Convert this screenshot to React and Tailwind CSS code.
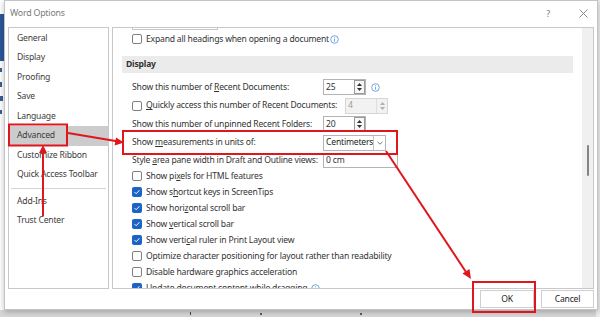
import React from "react";

function Check({ checked }) {
  if (checked) {
    return (
      <span className="w-[10px] h-[10px] rounded-[2px] bg-[#1b63c6] flex items-center justify-center shrink-0">
        <svg width="8" height="8" viewBox="0 0 8 8">
          <path d="M1.6 4.1 L3.2 5.7 L6.4 2.3" fill="none" stroke="white" strokeWidth="1" />
        </svg>
      </span>
    );
  }
  return <span className="w-[10px] h-[10px] rounded-[2px] border border-[#7f7f7f] bg-white shrink-0" />;
}

function Info() {
  return (
    <svg width="9" height="9" viewBox="0 0 9 9" className="shrink-0">
      <circle cx="4.5" cy="4.5" r="3.8" fill="none" stroke="#4f8fdc" strokeWidth="0.8" />
      <circle cx="4.5" cy="2.7" r="0.5" fill="#4f8fdc" />
      <path d="M4.5 3.9 V6.6" stroke="#4f8fdc" strokeWidth="0.8" />
    </svg>
  );
}

function Spinner({ value, disabled }) {
  return (
    <div
      className={
        disabled
          ? "h-[16px] w-[43px] border border-[#d6d6d6] bg-[#f2f2f2] text-[#9a9a9a] flex items-center shrink-0"
          : "h-[16px] w-[43px] border border-[#b4b4b4] bg-white flex items-center shrink-0"
      }
    >
      <span className="pl-[2px] flex-1">{value}</span>
      <div
        className={
          disabled
            ? "w-[11px] h-[14px] border-l border-[#dedede] flex flex-col items-center justify-center gap-[2px]"
            : "w-[11px] h-[14px] border border-[#9a9a9a] bg-[#f7f7f7] flex flex-col items-center justify-center gap-[2px]"
        }
      >
        <svg width="5" height="3" viewBox="0 0 5 3">
          <path d="M0 3 L2.5 0 L5 3 Z" fill={disabled ? "#b0b0b0" : "#333"} />
        </svg>
        <svg width="5" height="3" viewBox="0 0 5 3">
          <path d="M0 0 L2.5 3 L5 0 Z" fill={disabled ? "#b0b0b0" : "#333"} />
        </svg>
      </div>
    </div>
  );
}

function CheckRow({ checked, children }) {
  return (
    <div className="flex items-center h-[16px] pl-[19px] gap-[4px] shrink-0 whitespace-nowrap">
      <Check checked={checked} />
      <span>{children}</span>
    </div>
  );
}

function NavItem({ children, active }) {
  return (
    <div
      className={
        active
          ? "h-[19.5px] flex items-center pl-[8px] bg-[#cccccc]"
          : "h-[19.5px] flex items-center pl-[8px]"
      }
    >
      {children}
    </div>
  );
}

export default function App() {
  return (
    <div className="relative w-[600px] h-[317px] overflow-hidden bg-[#d8d8d8] font-['Noto_Sans',sans-serif] text-[8.6px] tracking-[-0.2px] text-[#333]">
      {/* desktop behind the dialog */}
      <div className="absolute left-0 top-0 w-[8px] h-[310px] bg-white" />
      <div className="absolute left-0 top-[14px] w-[8px] h-[47px] bg-[#2b579a]" />
      <div className="absolute left-0 top-[68px] w-[2px] h-[4px] bg-[#3a5f94]" />
      <div className="absolute left-0 top-[82px] w-[2px] h-[5px] bg-[#3a5f94]" />
      <div className="absolute left-0 top-[96px] w-[3px] h-[5px] bg-[#3a5f94]" />
      <div className="absolute left-0 top-[110px] w-[2px] h-[4px] bg-[#3a5f94]" />
      <div className="absolute right-0 top-0 w-[4px] h-[317px] bg-[#ececec]" />

      {/* dialog window */}
      <div className="absolute left-[4px] top-0 w-[594px] h-[310px] bg-white border border-[#c4c4c4] shadow-[0_2px_6px_rgba(0,0,0,0.25)] flex flex-col">
        {/* title bar */}
        <div className="h-[26px] flex items-center shrink-0 relative">
          <span className="pl-[5px] text-[#7a7a7a] text-[8.8px]">Word Options</span>
          <span className="ml-auto mr-[29px] text-[#7a7a7a] text-[9px]">?</span>
          <svg width="9" height="9" viewBox="0 0 9 9" className="mr-[9px] mb-[2px]">
            <path d="M0.5 0.5 L8.5 8.5 M8.5 0.5 L0.5 8.5" stroke="#808080" strokeWidth="0.9" />
          </svg>
        </div>

        {/* body */}
        <div className="flex h-[262px] pl-[3px] pr-[3px] gap-[3px] shrink-0">
          {/* nav */}
          <div className="w-[101px] border border-[#c8c8c8] flex flex-col pt-[0.5px] text-[#3c3c3c]">
            <NavItem>General</NavItem>
            <NavItem>Display</NavItem>
            <NavItem>Proofing</NavItem>
            <NavItem>Save</NavItem>
            <NavItem>Language</NavItem>
            <NavItem active>Advanced</NavItem>
            <NavItem>Customize Ribbon</NavItem>
            <NavItem>Quick Access Toolbar</NavItem>
            <div className="h-px bg-[#d4d4d4] mx-[2px] my-[3px]" />
            <NavItem>Add-Ins</NavItem>
            <NavItem>Trust Center</NavItem>
          </div>

          {/* content */}
          <div className="flex-1 border border-[#c8c8c8] flex overflow-hidden">
            <div className="flex-1 flex flex-col overflow-hidden">
              <div className="ml-[19px] w-[86px] h-[2px] border-x border-b border-[#c6c6c6] shrink-0" />
              <div className="flex items-center h-[16px] pl-[19px] gap-[4px] mt-[1px] shrink-0 whitespace-nowrap">
                <Check />
                <span>Expand all headings when opening a document</span>
                <span className="-ml-[3px]">
                  <Info />
                </span>
              </div>
              <div className="mt-[9px] mx-[9px] h-[17px] bg-[#ebebeb] flex items-center pl-[4px] font-bold shrink-0">
                Display
              </div>
              <div className="mt-[5px] flex items-center h-[18.5px] pl-[19px] shrink-0 whitespace-nowrap">
                <span className="w-[191px]">
                  Show this number of <u>R</u>ecent Documents:
                </span>
                <Spinner value="25" />
                <span className="ml-[5px]">
                  <Info />
                </span>
              </div>
              <div className="flex items-center h-[18.5px] pl-[19px] shrink-0 whitespace-nowrap">
                <div className="w-[213px] flex items-center gap-[4px]">
                  <Check />
                  <span>
                    <u>Q</u>uickly access this number of Recent Documents:
                  </span>
                </div>
                <Spinner value="4" disabled />
              </div>
              <div className="flex items-center h-[18.5px] pl-[19px] shrink-0 whitespace-nowrap">
                <span className="w-[191px]">Show this number of unpinned Recent Folders:</span>
                <Spinner value="20" />
              </div>
              <div className="flex items-center h-[18.5px] pl-[19px] shrink-0 whitespace-nowrap">
                <span className="w-[191px]">
                  Show <u>m</u>easurements in units of:
                </span>
                <div className="h-[16px] w-[63px] border border-[#b4b4b4] bg-white flex items-center shrink-0">
                  <span className="pl-[2px] flex-1 text-[#222]">Centimeters</span>
                  <div className="w-[12px] h-[14px] border-l border-[#c4c4c4] flex items-center justify-center">
                    <svg width="6" height="4" viewBox="0 0 6 4">
                      <path d="M0.5 0.8 L3 3.2 L5.5 0.8" fill="none" stroke="#555" strokeWidth="0.8" />
                    </svg>
                  </div>
                </div>
              </div>
              <div className="flex items-center h-[16px] pl-[19px] shrink-0 whitespace-nowrap">
                <span className="w-[191px]">
                  Style <u>a</u>rea pane width in Draft and Outline views:
                </span>
                <div className="h-[15px] w-[75px] border border-[#b4b4b4] bg-white flex items-center shrink-0">
                  <span className="pl-[2px]">0 cm</span>
                </div>
              </div>
              <CheckRow>
                Show pi<u>x</u>els for HTML features
              </CheckRow>
              <CheckRow checked>
                Show s<u>h</u>ortcut keys in ScreenTips
              </CheckRow>
              <CheckRow checked>
                Show hori<u>z</u>ontal scroll bar
              </CheckRow>
              <CheckRow checked>
                Show <u>v</u>ertical scroll bar
              </CheckRow>
              <CheckRow checked>
                Show verti<u>c</u>al ruler in Print Layout view
              </CheckRow>
              <CheckRow>Optimize character positioning for layout rather than readability</CheckRow>
              <CheckRow>Disable hardware graphics acceleration</CheckRow>
              <div className="flex items-center h-[16px] pl-[19px] gap-[4px] shrink-0 whitespace-nowrap">
                <Check checked />
                <span>Update document content while dragging</span>
                <Info />
              </div>
            </div>
            {/* scrollbar */}
            <div className="w-[11px] bg-[#f0f0f0] flex flex-col items-center shrink-0">
              <div className="mt-[117px] w-[2px] h-[31px] rounded-full bg-[#858585]" />
            </div>
          </div>
        </div>

        {/* footer */}
        <div className="flex justify-end gap-[7px] pr-[3px] pt-[1px]">
          <div className="w-[54px] h-[18px] border border-[#cfcfcf] bg-white flex items-center justify-center text-[#222]">
            OK
          </div>
          <div className="w-[53px] h-[18px] border border-[#cfcfcf] bg-white flex items-center justify-center text-[#222]">
            Cancel
          </div>
        </div>
      </div>

      {/* bottom strip ticks */}
      <div className="absolute left-[190px] top-[312px] w-[1px] h-[3px] bg-[#444]" />
      <div className="absolute left-[260px] top-[313px] w-[2px] h-[2px] bg-[#555]" />
      <div className="absolute left-[360px] top-[313px] w-[2px] h-[2px] bg-[#555]" />

      {/* red annotations */}
      <svg className="absolute left-0 top-0 pointer-events-none" width="600" height="317" viewBox="0 0 600 317">
        <g stroke="#e0161e" fill="none" strokeWidth="2">
          <rect x="9" y="124.5" width="58" height="21" />
          <rect x="123" y="131" width="274" height="23" />
          <rect x="473" y="282" width="62" height="30" />
          <line x1="68" y1="133" x2="117" y2="141.3" />
          <line x1="43" y1="216" x2="43" y2="152" />
          <line x1="386" y1="151" x2="466" y2="272" />
        </g>
        <g fill="#e0161e">
          <path d="M124 142.5 L116 137.5 L114.6 145.5 Z" />
          <path d="M43 145 L39 153 L47 153 Z" />
          <path d="M471 279 L462.5 273.5 L469.5 269 Z" />
        </g>
      </svg>
    </div>
  );
}
